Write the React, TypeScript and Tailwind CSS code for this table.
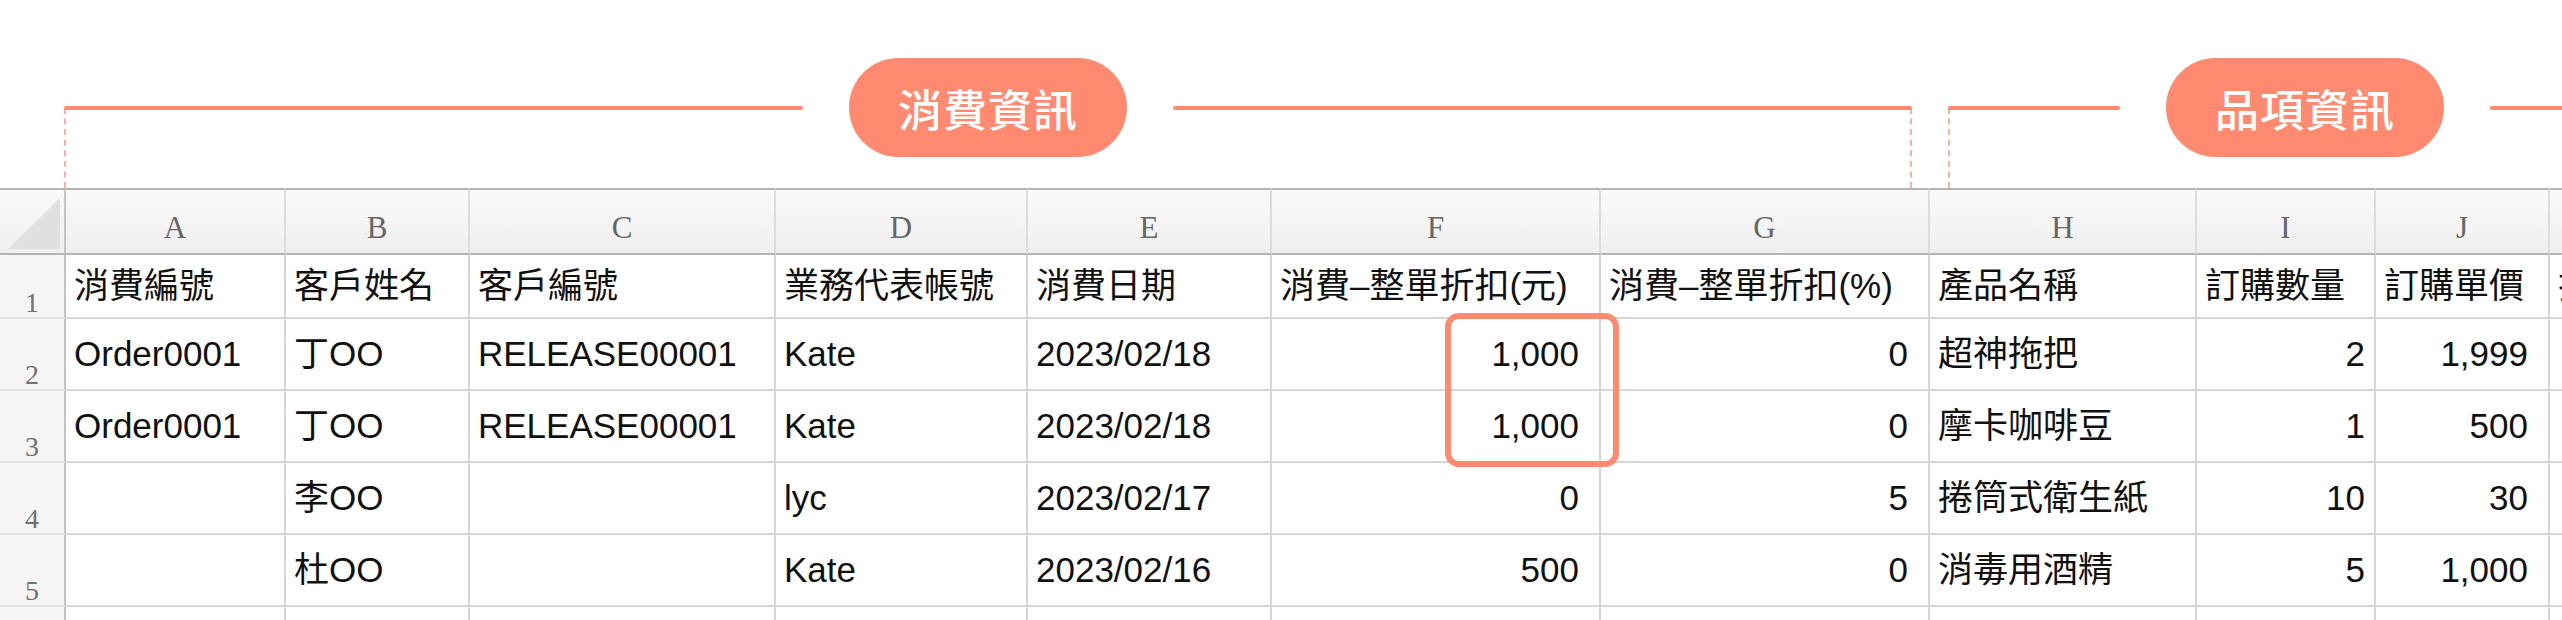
import clsx from "clsx";

// 試算表欄位說明圖：上方分組標籤 + 表格
const COLS = ["A", "B", "C", "D", "E", "F", "G", "H", "I", "J", "K"];

const HEAD = [
  "消費編號",
  "客戶姓名",
  "客戶編號",
  "業務代表帳號",
  "消費日期",
  "消費–整單折扣(元)",
  "消費–整單折扣(%)",
  "產品名稱",
  "訂購數量",
  "訂購單價",
  "折扣金額",
];

const ROWS = [
  ["Order0001", "丁OO", "RELEASE00001", "Kate", "2023/02/18", "1,000", "0", "超神拖把", "2", "1,999", ""],
  ["Order0001", "丁OO", "RELEASE00001", "Kate", "2023/02/18", "1,000", "0", "摩卡咖啡豆", "1", "500", ""],
  ["", "李OO", "", "lyc", "2023/02/17", "0", "5", "捲筒式衛生紙", "10", "30", ""],
  ["", "杜OO", "", "Kate", "2023/02/16", "500", "0", "消毒用酒精", "5", "1,000", ""],
  ["", "", "", "", "", "", "", "", "", "", ""],
];

// 數字欄靠右
const RIGHT = [5, 6, 8, 9];

function Pill({ children }: { children: string }) {
  return (
    <div className="flex h-[99px] w-[278px] shrink-0 items-center justify-center rounded-full bg-[#ff8a6f] font-['Noto_Sans_CJK_TC',sans-serif] text-[44px] font-medium tracking-[1px] text-white">
      {children}
    </div>
  );
}

function Banner() {
  return (
    <div className="flex h-[188px] items-end">
      <div className="w-[64px] shrink-0" />
      <div className="flex h-[80px] w-[1848px] shrink-0 flex-col border-x-2 border-dashed border-[#ffb09d]">
        <div className="-mx-[2px] -mt-[50px] flex h-[99px] items-center gap-[46px]">
          <div className="h-[4px] flex-1 rounded-full bg-[#ff8a6f]" />
          <Pill>消費資訊</Pill>
          <div className="h-[4px] flex-1 rounded-full bg-[#ff8a6f]" />
        </div>
      </div>
      <div className="w-[36px] shrink-0" />
      <div className="flex h-[80px] w-[700px] shrink-0 flex-col border-l-2 border-dashed border-[#ffb09d]">
        <div className="-ml-[2px] -mt-[50px] flex h-[99px] items-center gap-[46px]">
          <div className="h-[4px] w-[172px] rounded-full bg-[#ff8a6f]" />
          <Pill>品項資訊</Pill>
          <div className="h-[4px] flex-1 rounded-l-full bg-[#ff8a6f]" />
        </div>
      </div>
    </div>
  );
}

function Sheet() {
  return (
    <div className="relative grid w-max grid-cols-[66px_220px_184px_306px_252px_244px_329px_329px_267px_179px_174px_200px]">
      {/* 欄標頭 */}
      <div className="h-[67px] border-t-2 border-r-2 border-b-2 border-t-[#b4b4b4] border-r-[#c4c4c4] border-b-[#b4b4b4] bg-linear-to-b from-[#fafafa] to-[#efefef]">
        <svg width="64" height="63" viewBox="0 0 64 63">
          <polygon points="8,59 60,8 60,59" fill="#e0e0e0" />
        </svg>
      </div>
      {COLS.map((c) => (
        <div
          key={c}
          className="flex h-[67px] items-end justify-center border-t-2 border-r-2 border-b-2 border-t-[#b4b4b4] border-r-[#dcdcdc] border-b-[#b4b4b4] bg-linear-to-b from-[#fafafa] to-[#efefef] pb-[10px] font-['Liberation_Serif',serif] text-[31px] leading-none text-[#666]"
        >
          {c}
        </div>
      ))}

      {/* 第 1 列：欄位名稱 */}
      <div className="flex h-[64px] items-end justify-center border-r-2 border-b-2 border-r-[#c4c4c4] border-b-[#e2e2e2] bg-[#f5f5f5] font-['Liberation_Serif',serif] text-[28px] leading-none text-[#707070]">
        1
      </div>
      {HEAD.map((t, i) => (
        <div
          key={i}
          className="flex h-[64px] items-center overflow-hidden border-r-2 border-b-2 border-[#d6d6d6] pl-[8px] font-['Liberation_Sans','Noto_Sans_CJK_TC',sans-serif] text-[35px] leading-[40px] whitespace-nowrap text-[#111]"
        >
          {t}
        </div>
      ))}

      {/* 資料列 */}
      {ROWS.map((row, r) => (
        <div key={r} className="contents">
          <div className="flex h-[72px] items-end justify-center border-r-2 border-b-2 border-r-[#c4c4c4] border-b-[#e2e2e2] bg-[#f5f5f5] font-['Liberation_Serif',serif] text-[28px] leading-none text-[#707070]">
            {r < 4 ? r + 2 : ""}
          </div>
          {row.map((v, i) => (
            <div
              key={i}
              className={clsx(
                "flex h-[72px] items-center border-r-2 border-b-2 border-[#d6d6d6] pl-[8px] font-['Liberation_Sans','Noto_Sans_CJK_TC',sans-serif] text-[35px] leading-[40px] whitespace-nowrap text-[#111]",
                RIGHT.includes(i) && "justify-end",
                RIGHT.includes(i) && (i === 8 ? "pr-[9px]" : "pr-[20px]")
              )}
            >
              {v}
            </div>
          ))}
        </div>
      ))}

      {/* 標示框 */}
      <div className="absolute top-[125px] left-[1445px] h-[154px] w-[174px] rounded-[14px] border-[6px] border-[#ff8a6f]" />
    </div>
  );
}

export default function App() {
  return (
    <div className="h-[620px] w-[2562px] overflow-hidden bg-white">
      <Banner />
      <Sheet />
    </div>
  );
}
